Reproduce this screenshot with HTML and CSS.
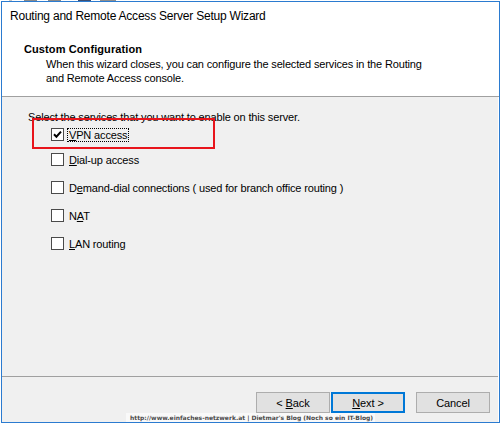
FILE: index.html
```html
<!DOCTYPE html>
<html>
<head>
<meta charset="utf-8">
<link rel="stylesheet" href="styles.css">
</head>
<body>
<div class="strip">
  <span class="blk b1"></span><span class="blk b2"></span><span class="blk b3"></span><span class="blk b4"></span><span class="blk b5"></span>
</div>
<div class="dialog">
  <header class="head">
    <div class="title">Routing and Remote Access Server Setup Wizard</div>
    <div class="heading">Custom Configuration</div>
    <div class="desc">When this wizard closes, you can configure the selected services in the Routing<br>and Remote Access console.</div>
  </header>
  <main class="body">
    <div class="prompt">Select the services that you want to enable on this server.</div>
    <div class="options">
      <div class="opt first">
        <span class="box"><svg width="11" height="11" viewBox="0 0 11 11"><path d="M2 5.3 L4.4 7.7 L9 2.6" fill="none" stroke="#000" stroke-width="2"/></svg></span>
        <span class="lbl focus"><u>V</u>PN access</span>
      </div>
      <div class="opt">
        <span class="box"></span>
        <span class="lbl"><u>D</u>ial-up access</span>
      </div>
      <div class="opt">
        <span class="box"></span>
        <span class="lbl">D<u>e</u>mand-dial connections ( used for branch office routing )</span>
      </div>
      <div class="opt">
        <span class="box"></span>
        <span class="lbl">N<u>A</u>T</span>
      </div>
      <div class="opt">
        <span class="box"></span>
        <span class="lbl"><u>L</u>AN routing</span>
      </div>
    </div>
    <div class="highlight"></div>
  </main>
  <footer class="foot">
    <button class="btn">&lt; <u>B</u>ack</button>
    <button class="btn primary"><u>N</u>ext &gt;</button>
    <button class="btn cancel">Cancel</button>
  </footer>
</div>
<div class="watermark">http://www.einfaches-netzwerk.at | Dietmar's Blog (Noch so ein IT-Blog)</div>
</body>
</html>
```
FILE: styles.css
```css
html, body {
  margin: 0;
  padding: 0;
  background: #fff;
}
body {
  font-family: "Liberation Sans", Arial, sans-serif;
  font-size: 11px;
  letter-spacing: -0.15px;
  color: #000;
  position: relative;
  width: 502px;
  height: 425px;
  overflow: hidden;
}
.strip {
  height: 1px;
  display: flex;
}
.blk { height: 1px; display: block; }
.b1 { margin-left: 9px; width: 3px; background: #c8c8c8; }
.b2 { margin-left: 12px; width: 13px; background: #8a8a8a; }
.b3 { margin-left: 11px; width: 13px; background: #8a8a8a; }
.b4 { margin-left: 17px; width: 13px; background: #3d4f72; }
.b5 { margin-left: 9px; width: 16px; background: #8e8e8e; }

.dialog {
  margin-left: 1px;
  width: 499px;
  height: 422px;
  box-sizing: border-box;
  border: 1px solid #2b7bd0;
  background: #fff;
  display: flex;
  flex-direction: column;
}
.head {
  height: 95px;
  box-sizing: border-box;
  border-bottom: 1px solid #a0a0a0;
  padding: 6px 0 0 8px;
  background: #fff;
  flex: none;
}
.title {
  font-size: 12px;
  letter-spacing: -0.22px;
  line-height: 16px;
}
.heading {
  margin-top: 18px;
  padding-left: 14px;
  font-weight: bold;
  letter-spacing: 0.1px;
  line-height: 14px;
}
.desc {
  margin-top: 1px;
  padding-left: 36px;
  line-height: 14px;
}
.body {
  flex: 1;
  position: relative;
  background: #f0f0f0;
  margin-right: 1px;
  padding: 13px 0 0 26px;
}
.prompt {
  line-height: 14px;
}
.options {
  margin-top: 4px;
  padding-left: 23px;
  display: flex;
  flex-direction: column;
  gap: 14px;
}
.opt {
  display: flex;
  align-items: flex-start;
  height: 14px;
}
.opt.first { margin-bottom: -3px; }
.box {
  width: 13px;
  height: 13px;
  box-sizing: border-box;
  border: 1px solid #4a4a4a;
  background: #fff;
  display: flex;
  align-items: center;
  justify-content: center;
  flex: none;
}
.box svg { display: block; }
.lbl {
  margin-left: 3px;
  padding: 0 1px;
  border: 1px solid transparent;
  line-height: 12px;
  white-space: nowrap;
}
.lbl.focus {
  border: 1px dotted #000;
}
u { text-underline-offset: 1px; }
.highlight {
  position: absolute;
  left: 30px;
  top: 21px;
  width: 183px;
  height: 31px;
  box-sizing: border-box;
  border: 2px solid #e8141b;
}
.foot {
  height: 46px;
  box-sizing: border-box;
  border-top: 1px solid #a0a0a0;
  background: #f0f0f0;
  margin-right: 1px;
  flex: none;
  display: flex;
  justify-content: flex-end;
  align-items: flex-start;
  padding: 15px 8px 0 0;
}
.btn {
  width: 74px;
  height: 21px;
  box-sizing: border-box;
  border: 1px solid #adadad;
  background: #e1e1e1;
  font-family: "Liberation Sans", Arial, sans-serif;
  font-size: 11px;
  letter-spacing: -0.1px;
  color: #000;
  padding: 0;
  margin: 0;
  border-radius: 0;
}
.btn.primary {
  margin-left: 1px;
  border: 2px solid #0078d7;
}
.btn.cancel {
  margin-left: 11px;
}
.watermark {
  position: absolute;
  left: 126px;
  top: 413px;
  width: 249px;
  height: 9px;
  background: rgba(250, 250, 250, 0.85);
  font-family: "DejaVu Sans", Verdana, sans-serif;
  font-weight: bold;
  font-size: 6px;
  letter-spacing: 0;
  line-height: 9px;
  color: #4a4a4a;
  padding-left: 4px;
  box-sizing: border-box;
  white-space: nowrap;
  overflow: hidden;
}
```
